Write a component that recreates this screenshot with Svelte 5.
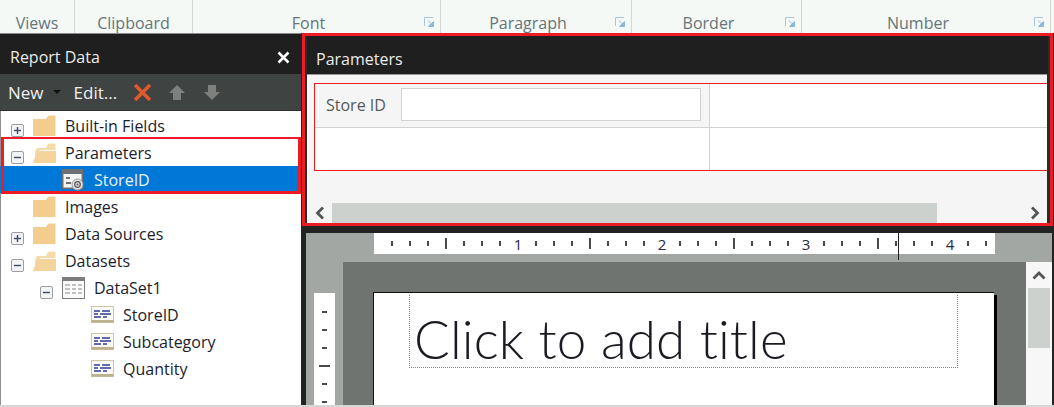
<script>
  const groups = [
    { name: 'Views', width: 75 },
    { name: 'Clipboard', width: 118 },
    { name: 'Font', width: 248, launcher: true },
    { name: 'Paragraph', width: 191, launcher: true },
    { name: 'Border', width: 170, launcher: true },
    { name: 'Number', width: 249, launcher: true }
  ];

  const before = [{ label: 'Built-in Fields', depth: 0, icon: 'folder', toggle: '+' }];
  const highlighted = [
    { label: 'Parameters', depth: 0, icon: 'open', toggle: '-' },
    { label: 'StoreID', depth: 1, icon: 'param', selected: true }
  ];
  const after = [
    { label: 'Images', depth: 0, icon: 'folder' },
    { label: 'Data Sources', depth: 0, icon: 'folder', toggle: '+' },
    { label: 'Datasets', depth: 0, icon: 'open', toggle: '-' },
    { label: 'DataSet1', depth: 1, icon: 'table', toggle: '-' },
    { label: 'StoreID', depth: 2, icon: 'field' },
    { label: 'Subcategory', depth: 2, icon: 'field' },
    { label: 'Quantity', depth: 2, icon: 'field' }
  ];

  // one tick every 18px, a number every 8 ticks, a long tick halfway
  const hTicks = Array.from({ length: 34 }, (_, i) => i + 1);
  const vTicks = Array.from({ length: 6 }, (_, i) => i + 1);
</script>

{#snippet row(item)}
  <div class="row" class:selected={item.selected} style="padding-left: {11 + item.depth * 29}px">
    <span class="toggle" class:empty={!item.toggle}>
      {#if item.toggle}
        <svg width="13" height="13" viewBox="0 0 13 13">
          <rect x="0.5" y="0.5" width="12" height="12" rx="1.5" fill="#f3f4f6" stroke="#9a9ca0" />
          <path d="M3 6.5h7" stroke="#3c4a66" stroke-width="1.4" />
          {#if item.toggle === '+'}<path d="M6.5 3v7" stroke="#3c4a66" stroke-width="1.4" />{/if}
        </svg>
      {/if}
    </span>
    <span class="icon">
      {#if item.icon === 'folder'}
        <svg width="23" height="22" viewBox="0 0 23 22">
          <path d="M0 4h13l2-3q.5-.5 1-.5h6.5V21H0z" fill="#f3cd8e" />
        </svg>
      {:else if item.icon === 'open'}
        <svg width="23" height="22" viewBox="0 0 23 22">
          <path d="M2 21V10L4 6h9l2-4q.4-.5 1-.5h6.5V8H7L3 21z" fill="#f6dba9" />
          <path d="M0 21 4 9h19v12z" fill="#f5d49c" />
        </svg>
      {:else if item.icon === 'param'}
        <svg width="22" height="22" viewBox="0 0 22 22">
          <rect width="21" height="20" y="0" fill="#6d6f72" />
          <rect x="1.5" y="5" width="18" height="13.5" fill="#f5f5f5" />
          <path d="M4 9h4M4 14h5" stroke="#444" stroke-width="1.4" />
          <circle cx="15.5" cy="15.5" r="5.5" fill="#e4e4e4" stroke="#9a9a9a" />
          <circle cx="15.5" cy="15.5" r="2.8" fill="none" stroke="#555" stroke-width="1.2" />
          <circle cx="15.5" cy="15.5" r="1" fill="#555" />
        </svg>
      {:else if item.icon === 'table'}
        <svg width="23" height="22" viewBox="0 0 23 22">
          <rect x="0.5" y="0.5" width="22" height="21" fill="#fbfbfb" stroke="#7d7d7d" />
          <rect x="0" y="0" width="23" height="4" fill="#7d7d7d" />
          <path d="M3 8h5M10 8h4M16 8h4M3 12h5M10 12h4M16 12h4M3 16h5M10 16h4M16 16h4" stroke="#c2c2c2" stroke-width="2" />
        </svg>
      {:else}
        <svg width="23" height="17" viewBox="0 0 23 17">
          <rect x="0.5" y="0.5" width="22" height="16" fill="#fbfaf6" stroke="#cfc5a8" />
          <rect x="0.5" y="14" width="22" height="2.5" fill="#bdb08c" />
          <path d="M3 5h6M11 5h8M3 8h4M9 8h11M3 11h7M12 11h4" stroke="#2f3a9a" stroke-width="1.3" />
        </svg>
      {/if}
    </span>
    <span class="label">{item.label}</span>
  </div>
{/snippet}

<div class="screen">
  <header class="ribbon">
    {#each groups as group}
      <div class="group" class:has-launcher={group.launcher} style="width: {group.width}px">
        <span>{group.name}</span>
        {#if group.launcher}
          <svg class="launcher" width="11" height="11" viewBox="0 0 11 11">
            <path d="M.5 9V.5H9" fill="none" stroke="#a9c6dd" />
            <path d="M4 3.5l4.5 4.5M9.5 4.5v5h-5z" fill="#8db7d8" stroke="#8db7d8" />
          </svg>
        {/if}
      </div>
    {/each}
  </header>

  <main class="body">
    <aside class="report-data">
      <div class="title-bar">
        <span>Report Data</span>
        <svg width="13" height="13" viewBox="0 0 13 13">
          <path d="M1.5 1.5l10 10M11.5 1.5l-10 10" stroke="#fff" stroke-width="2.6" />
        </svg>
      </div>
      <div class="toolbar">
        <span class="new">New</span>
        <span class="caret"></span>
        <span class="edit">Edit...</span>
        <svg class="delete" width="19" height="19" viewBox="0 0 19 19">
          <path d="M2 2l15 15M17 2 2 17" stroke="#dc5a2c" stroke-width="3.6" />
        </svg>
        <svg class="up" width="16" height="15" viewBox="0 0 16 15">
          <path d="M8 0l8 8h-4v7H4V8H0z" fill="#7d807d" />
        </svg>
        <svg class="down" width="16" height="15" viewBox="0 0 16 15">
          <path d="M8 15l8-8h-4V0H4v7H0z" fill="#7d807d" />
        </svg>
      </div>
      <div class="tree">
        {#each before as item}{@render row(item)}{/each}
        <div class="marked">
          {#each highlighted as item}{@render row(item)}{/each}
        </div>
        {#each after as item}{@render row(item)}{/each}
      </div>
    </aside>

    <section class="right">
      <div class="params">
        <div class="params-title">Parameters</div>
        <div class="params-body">
          <div class="params-table">
            <div class="cell filled">
              <span>Store ID</span>
              <input type="text" aria-label="Store ID" />
            </div>
            <div class="cell"></div>
            <div class="cell"></div>
            <div class="cell"></div>
          </div>
          <div class="hscroll">
            <span class="scroll-btn">
              <svg width="11" height="14" viewBox="0 0 11 14"><path d="M9 1.5 3.500 7 9 12.500" fill="none" stroke="#555" stroke-width="2.8" /></svg>
            </span>
            <span class="hthumb"></span>
            <span class="scroll-btn end">
              <svg width="11" height="14" viewBox="0 0 11 14"><path d="M2 1.5 7.500 7 2 12.500" fill="none" stroke="#555" stroke-width="2.8" /></svg>
            </span>
          </div>
        </div>
      </div>

      <div class="designer">
        <div class="ruler-strip">
          <div class="ruler">
            {#each hTicks as t}
              <span class="h-cell">
                {#if t % 8 === 0}
                  <b>{t / 8}</b>
                {:else}
                  <i class:long={t % 4 === 0}></i>
                {/if}
              </span>
            {/each}
            <span class="cursor"></span>
          </div>
        </div>
        <div class="work">
          <div class="v-strip">
            <div class="v-ruler">
              {#each vTicks as t}
                <span class="v-cell"><i class:long={t === 4}></i></span>
              {/each}
            </div>
          </div>
          <div class="canvas">
            <div class="page">
              <div class="placeholder">Click to add title</div>
            </div>
          </div>
          <div class="vscroll">
            <span class="scroll-btn up-btn">
              <svg width="14" height="10" viewBox="0 0 14 10"><path d="M1.5 8.500 7 3l5.500 5.500" fill="none" stroke="#555" stroke-width="2.8" /></svg>
            </span>
            <span class="vthumb"></span>
          </div>
        </div>
      </div>
    </section>
  </main>
</div>

<style>
  :global(body) {
    margin: 0;
    background: #d6d8d6;
  }

  .screen {
    width: 1054px;
    height: 407px;
    overflow: hidden;
    display: flex;
    flex-direction: column;
    font-family: "Open Sans", "Noto Sans", sans-serif;
    font-size: 16px;
  }

  .ribbon {
    height: 33px;
    flex: none;
    display: flex;
    background: #f4f9f6;
  }

  .group {
    position: relative;
    flex: none;
    box-sizing: border-box;
    border-right: 1px solid #d4d6d4;
    padding-top: 13px;
    text-align: center;
    color: #66757a;
    line-height: 20px;
  }

  .group.has-launcher {
    padding-right: 16px;
  }

  .launcher {
    position: absolute;
    right: 5px;
    top: 17px;
  }

  .body {
    flex: 1;
    min-height: 0;
    margin-bottom: 2px;
    display: flex;
    background: #232323;
  }

  .report-data {
    width: 301px;
    flex: none;
    border-top: 1px solid #8a8a8a;
    display: flex;
    flex-direction: column;
  }

  .title-bar {
    height: 40px;
    flex: none;
    box-sizing: border-box;
    padding: 6px 11px 0 10px;
    display: flex;
    align-items: center;
    justify-content: space-between;
    background: #1f1f1f;
    color: #ebebeb;
  }

  .toolbar {
    height: 37px;
    flex: none;
    display: flex;
    align-items: center;
    background: #3f4341;
    color: #eef0f2;
    font-size: 17px;
    border-bottom: 1px solid #2f312f;
    box-sizing: border-box;
  }

  .new {
    margin-left: 8px;
  }

  .caret {
    margin-left: 9px;
    border: 4px solid transparent;
    border-top-color: #111;
    border-bottom: 0;
  }

  .edit {
    margin-left: 13px;
  }

  .delete {
    margin-left: 16px;
  }

  .up {
    margin-left: 17px;
  }

  .down {
    margin-left: 19px;
  }

  .tree {
    flex: 1;
    background: #fff;
    padding-top: 1px;
    color: #1d1d2b;
    border-left: 1px solid #8f8f8f;
  }

  .marked {
    position: relative;
  }

  .marked::after {
    content: "";
    position: absolute;
    inset: -2px 0 -1px 0;
    border: 3px solid #ed1c24;
    border-top-width: 2px;
    pointer-events: none;
  }

  .row {
    height: 27px;
    display: flex;
    align-items: center;
    margin-left: -1px;
  }

  .row.selected {
    background: #0078d7;
    color: #eaf4fc;
  }

  .toggle {
    width: 13px;
    height: 13px;
    flex: none;
    margin-right: 9px;
    margin-top: 2px;
  }

  .icon {
    width: 23px;
    height: 22px;
    flex: none;
    margin-right: 9px;
    display: flex;
    align-items: center;
  }

  .right {
    flex: 1;
    min-width: 0;
    margin-left: 1px;
    margin-right: 1px;
    display: flex;
    flex-direction: column;
  }

  .params {
    height: 193px;
    flex: none;
    box-sizing: border-box;
    border: 3px solid #ed1c24;
    padding: 0 2px;
    background: #2b2b2b;
    display: flex;
    flex-direction: column;
  }

  .params-title {
    height: 38px;
    flex: none;
    box-sizing: border-box;
    padding: 13px 0 0 9px;
    background: #1f1f1f;
    color: #ebebeb;
    line-height: 20px;
  }

  .params-body {
    flex: 1;
    background: #f5f5f5;
    border-top: 1px solid #999;
    display: flex;
    flex-direction: column;
    justify-content: space-between;
    padding-top: 8px;
    box-sizing: border-box;
    margin-right: 1px;
  }

  .params-table {
    margin-left: 7px;
    height: 88px;
    box-sizing: border-box;
    border: 1px solid #ed1c24;
    border-right: 0;
    display: grid;
    grid-template-columns: 395px 1fr;
    grid-template-rows: 44px 1fr;
    background: #fff;
  }

  .cell {
    border-right: 1px solid #d2d2d2;
    border-bottom: 1px solid #d2d2d2;
  }

  .cell:nth-child(even) {
    border-right: 0;
  }

  .cell:nth-child(n + 3) {
    border-bottom: 0;
  }

  .filled {
    background: #f5f5f5;
    display: flex;
    align-items: center;
    padding-left: 11px;
    padding-bottom: 2px;
    color: #55595c;
  }

  .filled span {
    width: 75px;
    flex: none;
  }

  .filled input {
    width: 300px;
    height: 33px;
    margin: 0;
    padding: 0;
    box-sizing: border-box;
    border: 1px solid #d2d2d2;
    background: #fff;
  }

  .hscroll {
    height: 20px;
    display: flex;
    background: #f5f5f5;
  }

  .scroll-btn {
    display: flex;
    align-items: center;
    justify-content: center;
    flex: none;
  }

  .hscroll .scroll-btn {
    width: 25px;
  }

  .hscroll .end {
    flex: 1;
    justify-content: flex-end;
    padding-right: 6px;
  }

  .hthumb {
    width: 605px;
    flex: none;
    background: #cdd1ce;
  }

  .designer {
    flex: 1;
    min-height: 0;
    margin-top: 7px;
    margin-left: 4px;
    margin-right: 1px;
    background: #a3a7a3;
    display: flex;
    flex-direction: column;
  }

  .ruler-strip {
    height: 29px;
    flex: none;
    padding-left: 68px;
  }

  .ruler {
    position: relative;
    width: 621px;
    height: 21px;
    box-sizing: border-box;
    padding-left: 9px;
    background: #fff;
    display: flex;
    overflow: visible;
  }

  .h-cell {
    width: 18px;
    flex: none;
    display: flex;
    align-items: center;
    justify-content: center;
    font-size: 15px;
    color: #2a2a3a;
  }

  .h-cell b {
    font-weight: 400;
  }

  .h-cell i {
    width: 2px;
    height: 5px;
    background: #4a4a4a;
  }

  .h-cell i.long {
    height: 11px;
  }

  .cursor {
    position: absolute;
    left: 524px;
    top: 0;
    width: 1px;
    height: 27px;
    background: #222;
  }

  .work {
    flex: 1;
    min-height: 0;
    display: flex;
  }

  .v-strip {
    width: 37px;
    flex: none;
    padding: 31px 8px 0;
    box-sizing: border-box;
  }

  .v-ruler {
    height: 112px;
    background: #fff;
    padding-top: 10px;
    box-sizing: border-box;
  }

  .v-cell {
    height: 18px;
    display: flex;
    align-items: center;
    justify-content: center;
  }

  .v-cell i {
    width: 5px;
    height: 2px;
    background: #4a4a4a;
  }

  .v-cell i.long {
    width: 11px;
  }

  .canvas {
    flex: 1;
    min-width: 0;
    background: #6f7470;
    padding: 30px 0 0 30px;
    overflow: hidden;
  }

  .page {
    width: 621px;
    height: 200px;
    background: #fff;
    border-top: 1px solid #111;
    border-left: 1px solid #111;
    box-shadow: 3px 3px 0 #000;
    padding: 2px 0 0 35px;
    box-sizing: border-box;
  }

  .placeholder {
    width: 549px;
    height: 73px;
    box-sizing: border-box;
    border: 1px dotted #888;
    border-top-style: none;
    padding-left: 4px;
    font-family: Lato, "Open Sans", sans-serif;
    font-weight: 300;
    font-size: 53px;
    letter-spacing: 0.1px;
    font-variant-ligatures: none;
    line-height: 87px;
    color: #1a1a22;
    white-space: nowrap;
  }

  .vscroll {
    width: 26px;
    flex: none;
    background: #f7f7f7;
    display: flex;
    flex-direction: column;
    align-items: center;
  }

  .up-btn {
    height: 26px;
    width: 100%;
  }

  .vthumb {
    width: 22px;
    height: 60px;
    background: #cdd1ce;
  }
</style>
